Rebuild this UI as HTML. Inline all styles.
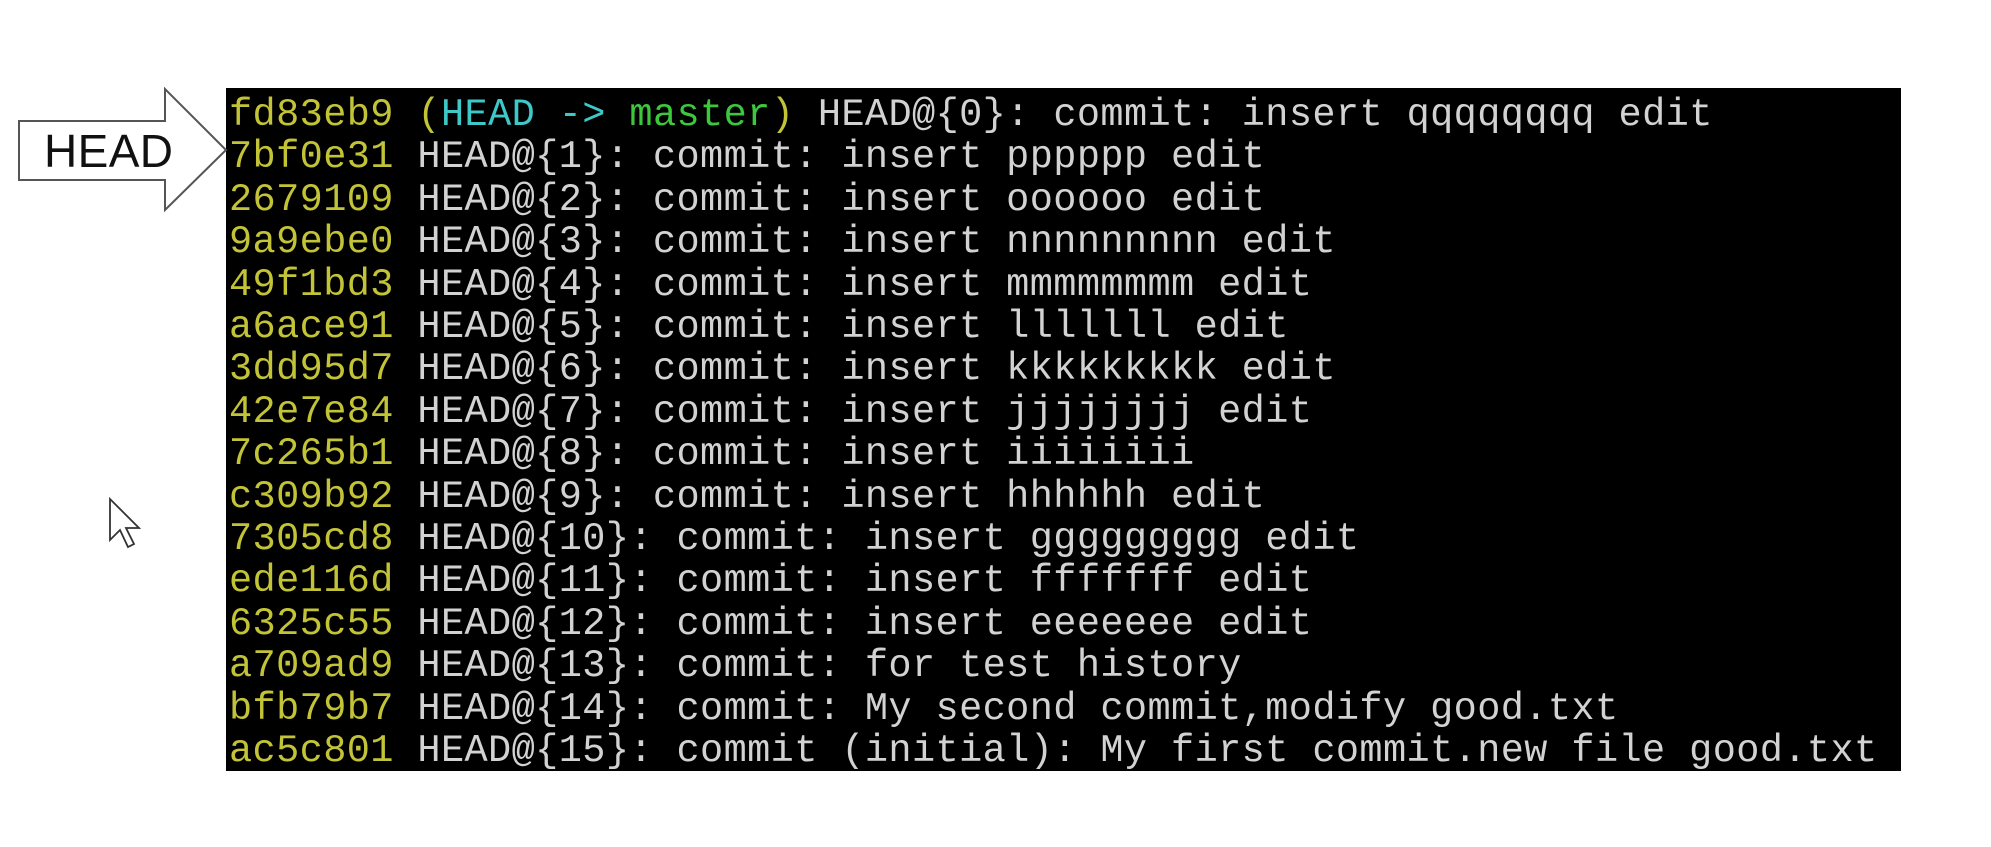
<!DOCTYPE html>
<html><head><meta charset="utf-8"><style>
body{margin:0;width:1991px;height:847px;background:#fff;position:relative;overflow:hidden}
#term{position:absolute;left:226px;top:88px;width:1675px;height:683px;background:#000}
pre{position:absolute;left:229px;top:94px;margin:0;font-family:"Liberation Mono",monospace;font-size:38.6px;line-height:42.4px;color:#d2d2d2;letter-spacing:0.4px}
.y{color:#c3c337}.c{color:#3ec8c8}.g{color:#3cc83c}
</style></head><body>
<div id="term"></div>
<pre><span class="y">fd83eb9</span> <span class="y">(</span><span class="c">HEAD -&gt; </span><span class="g">master</span><span class="y">)</span> HEAD@{0}: commit: insert qqqqqqqq edit
<span class="y">7bf0e31</span> HEAD@{1}: commit: insert pppppp edit
<span class="y">2679109</span> HEAD@{2}: commit: insert oooooo edit
<span class="y">9a9ebe0</span> HEAD@{3}: commit: insert nnnnnnnnn edit
<span class="y">49f1bd3</span> HEAD@{4}: commit: insert mmmmmmmm edit
<span class="y">a6ace91</span> HEAD@{5}: commit: insert lllllll edit
<span class="y">3dd95d7</span> HEAD@{6}: commit: insert kkkkkkkkk edit
<span class="y">42e7e84</span> HEAD@{7}: commit: insert jjjjjjjj edit
<span class="y">7c265b1</span> HEAD@{8}: commit: insert iiiiiiii
<span class="y">c309b92</span> HEAD@{9}: commit: insert hhhhhh edit
<span class="y">7305cd8</span> HEAD@{10}: commit: insert ggggggggg edit
<span class="y">ede116d</span> HEAD@{11}: commit: insert fffffff edit
<span class="y">6325c55</span> HEAD@{12}: commit: insert eeeeeee edit
<span class="y">a709ad9</span> HEAD@{13}: commit: for test history
<span class="y">bfb79b7</span> HEAD@{14}: commit: My second commit,modify good.txt
<span class="y">ac5c801</span> HEAD@{15}: commit (initial): My first commit.new file good.txt</pre>
<svg style="position:absolute;left:0;top:0" width="240" height="560">
<polygon points="19,121 165,121 165,89 226,150 165,210 165,180 19,180" fill="#fff" stroke="#555" stroke-width="2"/>
<text x="44" y="167" font-family="Liberation Sans,sans-serif" font-size="46" textLength="129" fill="#111">HEAD</text>
<polygon points="110,499 110,540 120,530 128,547 134,544 126,528 139,528" fill="#fff" stroke="#333" stroke-width="1.8"/>
</svg>
</body></html>
